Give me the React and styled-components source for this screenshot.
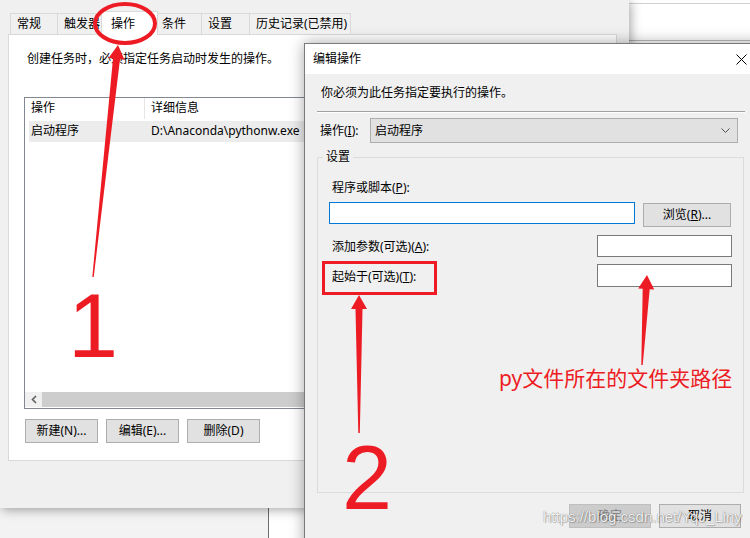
import React from "react";
import styled, { createGlobalStyle } from "styled-components";

const RED = "#ed1c24";
const UI_FONT = `"Noto Sans", "Noto Sans CJK SC", sans-serif`;

const GlobalStyle = createGlobalStyle`
  html, body {
    margin: 0;
    padding: 0;
    background: #ffffff;
  }
  body {
    font-family: ${UI_FONT};
    font-size: 12px;
    line-height: 16px;
    color: #000;
  }
  * { box-sizing: border-box; }
`;

const Desktop = styled.div`
  position: relative;
  width: 750px;
  height: 538px;
  overflow: hidden;
  background: #ffffff;
`;

const BackWindowTop = styled.div`
  position: absolute;
  left: 620px;
  top: 3px;
  width: 140px;
  height: 38px;
  background: #ffffff;
  border-top: 1px solid #d0d0d0;
  border-bottom: 1px solid #bdbdbd;
`;

const BackWindowBottom = styled.div`
  position: absolute;
  left: -2px;
  top: 470px;
  width: 271px;
  height: 90px;
  background: #f3f3f3;
  border-right: 1px solid #6e6e6e;
`;

const MainWindow = styled.div`
  position: absolute;
  left: 0;
  top: 0;
  width: 629px;
  height: 508px;
  padding: 13px 12px 0 8px;
  background: #f0f0f0;
  box-shadow: 2px 2px 10px rgba(0, 0, 0, 0.35);
`;

const TabStrip = styled.div`
  display: flex;
  align-items: flex-start;
  height: 21px;
  margin-left: 2px;
  position: relative;
  z-index: 1;
`;

const Tab = styled.div`
  width: ${(p) => p.$w}px;
  height: ${(p) => (p.$active ? 24 : 21)}px;
  margin: ${(p) => (p.$active ? "-2px -2px 0 -3px" : p.$first ? "0" : "0 0 0 -1px")};
  padding: ${(p) => (p.$active ? "4px 0 0 9px" : "2px 0 0 6px")};
  background: ${(p) => (p.$active ? "#ffffff" : "#f0f0f0")};
  border: 1px solid #d9d9d9;
  border-bottom: none;
  position: relative;
  z-index: ${(p) => (p.$active ? 2 : 1)};
  white-space: nowrap;
`;

const TabPanel = styled.div`
  height: 427px;
  background: #ffffff;
  border: 1px solid #d9d9d9;
  padding: 16px 0 0 15px;
`;

const Hint = styled.div`
  padding-left: ${(p) => p.$indent || 0}px;
  line-height: 16px;
`;

const ListView = styled.div`
  margin-top: 30px;
  width: 590px;
  height: 312px;
  border: 1px solid #828790;
  background: #ffffff;
  display: flex;
  flex-direction: column;
`;

const ListHeader = styled.div`
  display: flex;
  height: 21px;
`;

const HeaderCell = styled.div`
  width: ${(p) => p.$w || "auto"};
  flex: ${(p) => (p.$w ? "none" : 1)};
  padding: 2px 0 0 6px;
  border-right: ${(p) => (p.$w ? "1px solid #e5e5e5" : "none")};
`;

const ListRow = styled.div`
  display: flex;
  height: 21px;
  margin: 2px 0 0 4px;
  background: #ececec;
`;

const RowCell = styled.div`
  width: ${(p) => p.$w || "auto"};
  flex: ${(p) => (p.$w ? "none" : 1)};
  padding: 2px 0 0 ${(p) => p.$pad}px;
  white-space: nowrap;
`;

const ListSpacer = styled.div`
  flex: 1;
`;

const HScroll = styled.div`
  display: flex;
  height: 15px;
  margin-bottom: 1px;
  background: #f0f0f0;
`;

const ScrollArrow = styled.div`
  width: 17px;
  display: flex;
  align-items: center;
  justify-content: center;
`;

const ScrollThumb = styled.div`
  flex: 1;
  background: #cdcdcd;
`;

const ButtonRow = styled.div`
  display: flex;
  gap: ${(p) => p.$gap || 8}px;
  margin: ${(p) => p.$margin};
  justify-content: ${(p) => p.$justify || "flex-start"};
`;

const WinButton = styled.button`
  width: ${(p) => p.$w}px;
  height: 24px;
  margin-top: ${(p) => p.$top || 0}px;
  padding: 0;
  font-family: ${UI_FONT};
  font-size: 12px;
  line-height: 16px;
  background: ${(p) => (p.$disabled ? "#cccccc" : "#e1e1e1")};
  border: 1px solid ${(p) => (p.$disabled ? "#bfbfbf" : "#adadad")};
  color: ${(p) => (p.$disabled ? "#838383" : "#000")};
  flex: none;
`;

const Dialog = styled.div`
  position: absolute;
  left: 304px;
  top: 43px;
  width: 462px;
  height: 510px;
  background: #f0f0f0;
  border: 1px solid #7a7a7a;
  box-shadow: 0 0 14px rgba(0, 0, 0, 0.35);
  display: flex;
  flex-direction: column;
`;

const TitleBar = styled.div`
  height: 30px;
  flex: none;
  background: #ffffff;
  display: flex;
  align-items: center;
  justify-content: space-between;
  padding-left: 8px;
`;

const CloseButton = styled.div`
  width: 46px;
  height: 30px;
  margin-right: 1px;
  display: flex;
  align-items: center;
  justify-content: center;
`;

const DialogBody = styled.div`
  padding: 11px 21px 0 12px;
`;

const Separator = styled.div`
  margin: 10px -1px 0 0;
  height: 2px;
  border-top: 1px solid #a0a0a0;
  border-bottom: 1px solid #ffffff;
`;

const ActionRow = styled.div`
  display: flex;
  align-items: center;
  height: 25px;
  margin-top: 5px;
`;

const ActionLabel = styled.div`
  width: 53px;
  padding-left: 3px;
`;

const Combo = styled.div`
  width: 368px;
  height: 25px;
  background: #e1e1e1;
  border: 1px solid #adadad;
  display: flex;
  align-items: center;
  justify-content: space-between;
  padding: 0 7px 0 4px;
`;

const GroupBox = styled.fieldset`
  margin: 6px 0 0 0;
  height: 344px;
  min-width: 0;
  border: 1px solid #dcdcdc;
  padding: 0 11px;
`;

const Legend = styled.legend`
  margin-left: -6px;
  padding: 0 3px;
  line-height: 16px;
`;

const FieldLabel = styled.div`
  padding: ${(p) => p.$top || 0}px 0 0 3px;
  margin-top: ${(p) => p.$mt || 0}px;
  line-height: 16px;
`;

const FieldRow = styled.div`
  display: flex;
  align-items: ${(p) => p.$align || "center"};
  justify-content: ${(p) => p.$justify || "flex-start"};
  gap: ${(p) => p.$gap || 0}px;
  margin-top: ${(p) => p.$mt}px;
`;

const TextBox = styled.div`
  width: ${(p) => p.$w}px;
  height: ${(p) => p.$h || 22}px;
  background: #ffffff;
  border: 1px solid ${(p) => (p.$focus ? "#0078d7" : "#7a7a7a")};
  flex: none;
`;

const Key = styled.span`
  text-decoration: underline;
`;

const Annotations = styled.svg`
  position: absolute;
  left: 0;
  top: 0;
  width: 750px;
  height: 538px;
  pointer-events: none;
  z-index: 10;
`;

const Watermark = styled.span`
  position: absolute;
  left: 543px;
  top: 508px;
  z-index: 11;
  font-family: "Liberation Sans", Arial, sans-serif;
  font-size: 15px;
  line-height: 18px;
  color: rgba(255, 255, 255, 0.92);
  text-shadow: 0 0 1px rgba(0, 0, 0, 0.55), 1px 1px 1px rgba(0, 0, 0, 0.2);
  white-space: nowrap;
`;

// tapered red arrow, thin at the tail, wide under the head
const arrowPoints = (x1, y1, x2, y2, tailW = 1.5, shaftW = 7, headW = 16, headL = 14) => {
  const dx = x2 - x1;
  const dy = y2 - y1;
  const len = Math.hypot(dx, dy);
  const ux = dx / len;
  const uy = dy / len;
  const nx = -uy;
  const ny = ux;
  const bx = x2 - ux * headL;
  const by = y2 - uy * headL;
  const side = (x, y, w, s) => [x + (s * nx * w) / 2, y + (s * ny * w) / 2];
  const pts = [
    side(x1, y1, tailW, 1),
    side(bx, by, shaftW, 1),
    side(bx, by, headW, 1),
    [x2, y2],
    side(bx, by, headW, -1),
    side(bx, by, shaftW, -1),
    side(x1, y1, tailW, -1),
  ];
  return pts.map(([x, y]) => `${x.toFixed(1)},${y.toFixed(1)}`).join(" ");
};

const tabs = [
  { label: "常规", w: 48 },
  { label: "触发器", w: 47 },
  { label: "操作", w: 57, active: true },
  { label: "条件", w: 47 },
  { label: "设置", w: 49 },
  { label: "历史记录(已禁用)", w: 102 },
];

const App = () => {
  return (
    <Desktop>
      <GlobalStyle />
      <BackWindowTop />
      <BackWindowBottom />

      <MainWindow>
        <TabStrip>
          {tabs.map((t, i) => (
            <Tab key={t.label} $w={t.w} $active={t.active} $first={i === 0}>
              {t.label}
            </Tab>
          ))}
        </TabStrip>
        <TabPanel>
          <Hint $indent={3}>创建任务时，必须指定任务启动时发生的操作。</Hint>
          <ListView>
            <ListHeader>
              <HeaderCell $w="120px">操作</HeaderCell>
              <HeaderCell>详细信息</HeaderCell>
            </ListHeader>
            <ListRow>
              <RowCell $w="115px" $pad={2}>启动程序</RowCell>
              <RowCell $pad={7}>D:\Anaconda\pythonw.exe</RowCell>
            </ListRow>
            <ListSpacer />
            <HScroll>
              <ScrollArrow>
                <svg width="6" height="9" viewBox="0 0 6 9">
                  <polyline points="5,1 1.5,4.5 5,8" fill="none" stroke="#606060" strokeWidth="1.6" />
                </svg>
              </ScrollArrow>
              <ScrollThumb />
            </HScroll>
          </ListView>
          <ButtonRow $margin="10px 0 0 1px">
            <WinButton $w={73}>新建(N)...</WinButton>
            <WinButton $w={73}>编辑(E)...</WinButton>
            <WinButton $w={73}>删除(D)</WinButton>
          </ButtonRow>
        </TabPanel>
      </MainWindow>

      <Dialog>
        <TitleBar>
          <span>编辑操作</span>
          <CloseButton>
            <svg width="11" height="11" viewBox="0 0 11 11">
              <path d="M0.5 0.5 L10.5 10.5 M10.5 0.5 L0.5 10.5" stroke="#000" strokeWidth="1" />
            </svg>
          </CloseButton>
        </TitleBar>
        <DialogBody>
          <Hint $indent={4}>你必须为此任务指定要执行的操作。</Hint>
          <Separator />
          <ActionRow>
            <ActionLabel>
              操作(<Key>I</Key>):
            </ActionLabel>
            <Combo>
              <span>启动程序</span>
              <svg width="9" height="6" viewBox="0 0 9 6">
                <polyline points="0.5,0.5 4.5,4.5 8.5,0.5" fill="none" stroke="#505050" strokeWidth="1" />
              </svg>
            </Combo>
          </ActionRow>

          <GroupBox>
            <Legend>设置</Legend>
            <FieldLabel $mt={15}>
              程序或脚本(<Key>P</Key>):
            </FieldLabel>
            <FieldRow $mt={6} $gap={8} $align="flex-start">
              <TextBox $w={306} $focus />
              <WinButton $w={88} $top={1}>
                浏览(<Key>R</Key>)...
              </WinButton>
            </FieldRow>
            <FieldRow $mt={8} $justify="space-between">
              <FieldLabel $top={2}>
                添加参数(可选)(<Key>A</Key>):
              </FieldLabel>
              <TextBox $w={135} />
            </FieldRow>
            <FieldRow $mt={7} $justify="space-between">
              <FieldLabel $top={2}>
                起始于(可选)(<Key>T</Key>):
              </FieldLabel>
              <TextBox $w={135} $h={23} />
            </FieldRow>
          </GroupBox>

          <ButtonRow $margin="11px 3px 0 0" $justify="flex-end">
            <WinButton $w={82} $disabled>
              确定
            </WinButton>
            <WinButton $w={82}>取消</WinButton>
          </ButtonRow>
        </DialogBody>
      </Dialog>

      <Annotations viewBox="0 0 750 538">
        <ellipse cx="125" cy="23.5" rx="30" ry="19.5" fill="none" stroke={RED} strokeWidth="4" />
        <polygon points={arrowPoints(93, 277, 118, 45)} fill={RED} />
        <text x="68" y="357" fill={RED} fontSize="90" fontFamily="Liberation Sans, Arial, sans-serif">
          1
        </text>

        <rect x="323.5" y="262.5" width="112" height="31" fill="none" stroke={RED} strokeWidth="3" />
        <polygon points={arrowPoints(359, 433, 359, 295)} fill={RED} />
        <text x="342" y="509" fill={RED} fontSize="90" fontFamily="Liberation Sans, Arial, sans-serif">
          2
        </text>

        <polygon points={arrowPoints(642, 365, 647, 275)} fill={RED} />
        <text x="499" y="386" fill={RED} fontSize="21" fontFamily="Noto Sans, Noto Sans CJK SC, sans-serif">
          py文件所在的文件夹路径
        </text>
      </Annotations>

      <Watermark>https://blog.csdn.net/YqJ_Liny</Watermark>
    </Desktop>
  );
};

export default App;
